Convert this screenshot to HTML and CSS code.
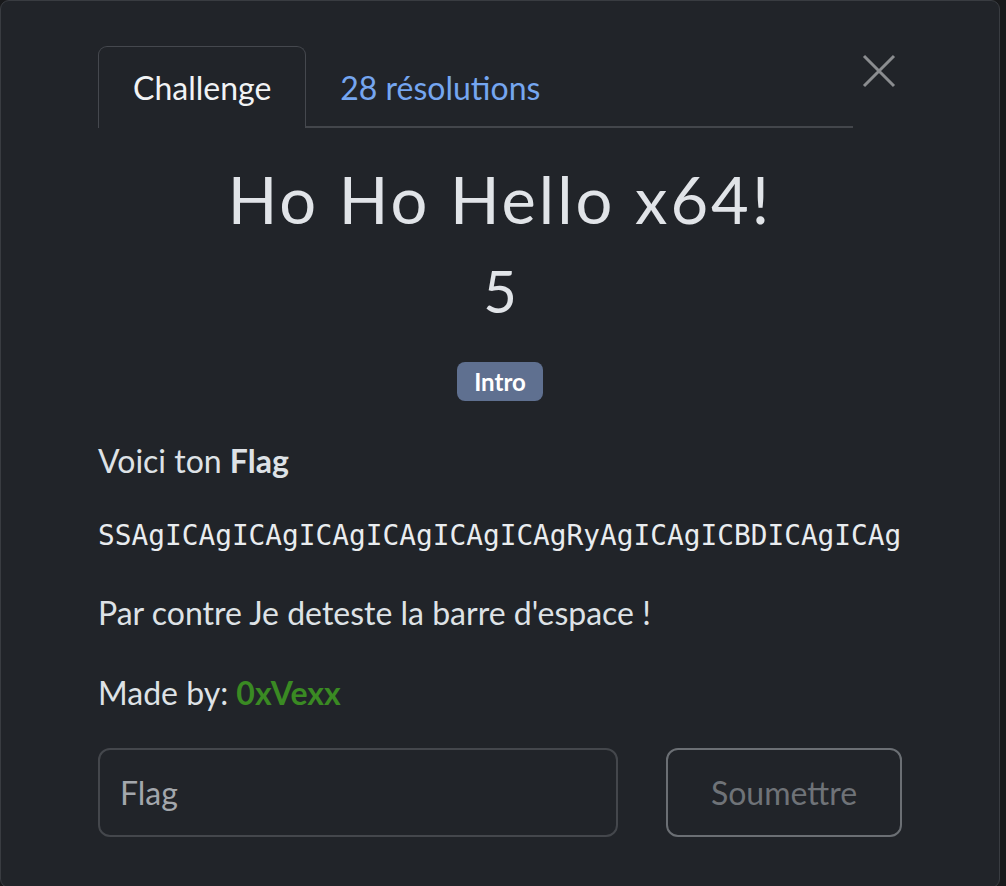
FILE: index.html
```html
<!DOCTYPE html>
<html lang="fr">
<head>
<meta charset="utf-8">
<title>Ho Ho Hello x64!</title>
<link rel="stylesheet" href="styles.css">
</head>
<body>
<div class="modal">
  <button class="close" aria-label="Fermer">
    <svg width="34" height="34" viewBox="0 0 34 34"><path d="M2 2 L32 32 M32 2 L2 32" stroke="#8b8d90" stroke-width="3" fill="none"/></svg>
  </button>
  <nav class="tabs">
    <a class="tab active">Challenge</a>
    <a class="tab link">28 résolutions</a>
  </nav>
  <h2 class="title">Ho Ho Hello x64!</h2>
  <h3 class="points">5</h3>
  <div class="tags"><span class="badge">Intro</span></div>
  <div class="desc">
    <p class="p1">Voici ton <strong>Flag</strong></p>
    <pre class="code">SSAgICAgICAgICAgICAgICAgICAgRyAgICAgICBDICAgICAg</pre>
    <p>Par contre Je deteste la barre d'espace !</p>
    <p class="author">Made by: <span class="green">0xVexx</span></p>
  </div>
  <form class="submit-row">
    <input class="flag-input" type="text" placeholder="Flag">
    <button class="submit" type="button">Soumettre</button>
  </form>
</div>
</body>
</html>
```
FILE: styles.css
```css
html, body {
  margin: 0;
  padding: 0;
  background: #18191b;
  width: 1006px;
  height: 886px;
  overflow: hidden;
}
body {
  font-family: Lato, "Open Sans", sans-serif;
  color: #dee2e6;
  font-size: 32px;
  line-height: 48px;
}
.modal {
  position: relative;
  box-sizing: border-box;
  width: 1000px;
  height: 888px;
  background: #212429;
  border: 1px solid #393c41;
  border-radius: 9px;
  padding: 45px 97px 0 97px;
}
.close {
  position: absolute;
  left: 861px;
  top: 53px;
  width: 34px;
  height: 34px;
  padding: 0;
  border: 0;
  background: none;
  display: block;
}
.close svg { display: block; }
.tabs {
  display: flex;
  width: 755px;
  border-bottom: 2px solid #43464b;
  height: 82px;
  box-sizing: border-box;
}
.tab {
  display: block;
  padding: 17px 34px 15px;
  border: 1px solid transparent;
  border-bottom: 0;
  border-radius: 9px 9px 0 0;
  margin-bottom: -2px;
}
.tab.active {
  border-color: #45484e;
  background: #212429;
  color: #f1f3f5;
}
.tab.link { color: #75a6f0; padding-left: 33px; }
.title {
  margin: 32px 0 0;
  text-align: center;
  font-weight: 400;
  font-size: 65px;
  line-height: 78px;
  letter-spacing: 3px;
  color: #e1e4e8;
}
.points {
  margin: 18px 0 0;
  text-align: center;
  font-weight: 400;
  font-size: 58px;
  line-height: 70px;
  color: #e1e4e8;
}
.tags {
  margin-top: 36px;
  display: flex;
  justify-content: center;
  line-height: 1;
}
.badge {
  display: block;
  box-sizing: border-box;
  height: 39px;
  padding: 0 17px;
  background: #5f7090;
  border-radius: 8px;
  color: #ffffff;
  font-weight: 700;
  font-size: 24px;
  line-height: 39px;
}
.desc p { margin: 0 0 32px; }
.desc .p1 { margin-top: 36px; margin-bottom: 30px; }
.desc strong { font-weight: 700; }
.code {
  margin: 0 0 32px;
  font-family: "DejaVu Sans Mono", monospace;
  font-size: 27.8px;
  line-height: 42px;
  white-space: pre;
  overflow: hidden;
  color: #e9ecef;
}
.green { color: #3a8a23; font-weight: 700; }
.desc .author { margin-bottom: 31px; }
.submit-row {
  display: flex;
  gap: 48px;
  margin: 0;
}
.flag-input {
  box-sizing: border-box;
  width: 520px;
  height: 89px;
  background: #212429;
  border: 2px solid #44474c;
  border-radius: 12px;
  padding: 0 20px;
  font-family: Lato, sans-serif;
  font-size: 32px;
  color: #dee2e6;
  outline: none;
}
.flag-input::placeholder { color: #a3a7ac; }
.submit {
  box-sizing: border-box;
  width: 236px;
  height: 89px;
  background: transparent;
  border: 2px solid #6b6f74;
  border-radius: 12px;
  font-family: Lato, sans-serif;
  font-size: 32px;
  color: #6f7378;
}
```
